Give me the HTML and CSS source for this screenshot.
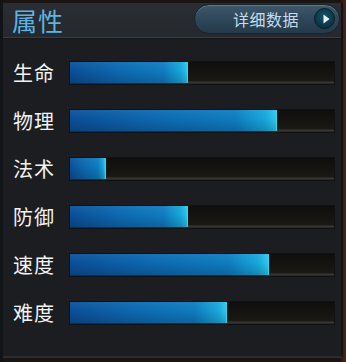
FILE: index.html
```html
<!DOCTYPE html>
<html>
<head>
<meta charset="utf-8">
<link rel="stylesheet" href="styles.css">
</head>
<body>
<div class="panel">
  <div class="header">
    <div class="title">属性</div>
    <div class="btn">
      <span class="btn-text">详细数据</span>
      <span class="btn-icon"><svg width="12" height="12" viewBox="0 0 12 12"><path d="M3.5 1.6 L9.6 6 L3.5 10.4 Z" fill="#e8f4fa"/></svg></span>
    </div>
  </div>
  <div class="rows">
    <div class="row"><span class="label">生命</span><div class="track"><div class="fill" style="width:118px"></div></div></div>
    <div class="row"><span class="label">物理</span><div class="track"><div class="fill" style="width:207px"></div></div></div>
    <div class="row"><span class="label">法术</span><div class="track"><div class="fill" style="width:36px"></div></div></div>
    <div class="row"><span class="label">防御</span><div class="track"><div class="fill" style="width:118px"></div></div></div>
    <div class="row"><span class="label">速度</span><div class="track"><div class="fill" style="width:199px"></div></div></div>
    <div class="row"><span class="label">难度</span><div class="track"><div class="fill" style="width:157px"></div></div></div>
  </div>
</div>
</body>
</html>
```
FILE: styles.css
```css
html, body {
  margin: 0;
  padding: 0;
}
body {
  width: 346px;
  height: 362px;
  overflow: hidden;
  background: linear-gradient(90deg, #101416 0, #101416 3px, #1a1412 3px, #1a1412 340px, #3a1d12 343px, #4a2414 346px);
  font-family: "Noto Sans CJK SC", "Noto Sans", sans-serif;
}
.panel {
  margin: 3px 0 0 3px;
  width: 338px;
  height: 353px;
  background: #1c1d21;
  border-right: 2px solid #121316;
  border-bottom: 2px solid #2a2c30;
  display: flex;
  flex-direction: column;
}
.header {
  height: 34px;
  background: linear-gradient(180deg, #2a2d33 0%, #25282d 100%);
  border-bottom: 1px solid #3a3d43;
  box-shadow: 0 1px 0 #141518;
  display: flex;
  align-items: center;
  justify-content: space-between;
  padding: 0 0 0 9px;
}
.title {
  font-size: 25px;
  color: #5cb4e4;
  line-height: 30px;
  letter-spacing: 1px;
  margin-top: -1px;
}
.btn {
  width: 146px;
  height: 30px;
  margin-right: 1px;
  margin-top: -3px;
  border-radius: 15px;
  background: linear-gradient(180deg, #3e586c 0%, #2f475a 50%, #243a4b 100%);
  border: 1px solid #16222c;
  box-shadow: inset 0 1px 0 rgba(150,190,215,0.35);
  display: flex;
  align-items: center;
  box-sizing: border-box;
  padding: 0 4px 0 38px;
}
.btn-text {
  font-size: 16px;
  color: #c6dceb;
  letter-spacing: 0.5px;
  flex: 1;
  line-height: 20px;
}
.btn-icon {
  width: 21px;
  height: 21px;
  border-radius: 50%;
  background: radial-gradient(circle at 50% 40%, #14566a 0%, #0b3444 70%, #082634 100%);
  border: 1px solid #0a1c26;
  box-sizing: border-box;
  display: flex;
  align-items: center;
  justify-content: center;
}
.btn-icon svg {
  margin-left: 2px;
}
.rows {
  padding-top: 11px;
  display: flex;
  flex-direction: column;
}
.row {
  height: 48px;
  display: flex;
  align-items: center;
  padding-left: 10px;
}
.label {
  width: 57px;
  font-size: 20px;
  color: #f2f2f2;
  line-height: 24px;
  letter-spacing: 1px;
}
.track {
  width: 264px;
  height: 22px;
  background: linear-gradient(180deg, #0f0e0c 0%, #161512 60%, #1a1916 85%, #3a3936 92%, #222220 100%);
  box-shadow: 0 0 0 1px #121214;
}
.fill {
  height: 21px;
  background:
    linear-gradient(180deg, rgba(255,255,255,0.06) 0%, rgba(0,0,0,0) 40%, rgba(0,0,0,0.18) 100%),
    linear-gradient(90deg, #0b4f98 0%, #0d68b0 40%, #0f7cc0 80%, #18a8dc 95%, #2cc8ec 100%);
  border-right: 1px solid #3ad0f0;
  box-sizing: border-box;
}
```
